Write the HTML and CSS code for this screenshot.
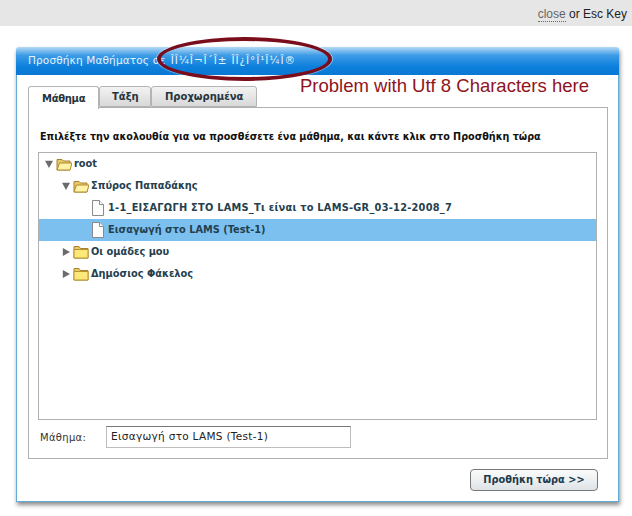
FILE: index.html
```html
<!DOCTYPE html>
<html lang="el">
<head>
<meta charset="utf-8">
<title>Προσθήκη Μαθήματος</title>
<link rel="stylesheet" href="styles.css">
</head>
<body>
<div class="topbar"><a class="close">close</a> or Esc Key</div>
<div class="dialog">
  <div class="dialog-head">Προσθήκη Μαθήματος σε <span class="garbled">ÎÎ¼Î¬Î´Î± ÎÎ¿Î°Î¹Î¼Î®</span></div>
  <div class="dialog-body">
    <div class="tabs">
      <div class="tab active">Μάθημα</div>
      <div class="tab">Τάξη</div>
      <div class="tab">Προχωρημένα</div>
    </div>
    <div class="panel">
      <p class="hint">Επιλέξτε την ακολουθία για να προσθέσετε ένα μάθημα, και κάντε κλικ στο Προσθήκη τώρα</p>
      <div class="tree">
        <div class="row lvl0"><svg class="arrow" viewBox="0 0 10 10"><path d="M0 1h10L5 10z"/></svg><svg class="ico" viewBox="0 0 16 14"><path class="fb" d="M1 13V2.500h5l1.500 1.500H14v9z"/><path class="ff" d="M1 13l2.500-7H16l-2 7z"/></svg><span>root</span></div>
        <div class="row lvl1"><svg class="arrow" viewBox="0 0 10 10"><path d="M0 1h10L5 10z"/></svg><svg class="ico" viewBox="0 0 16 14"><path class="fb" d="M1 13V2.500h5l1.500 1.500H14v9z"/><path class="ff" d="M1 13l2.500-7H16l-2 7z"/></svg><span>Σπύρος Παπαδάκης</span></div>
        <div class="row lvl2"><svg class="doc" viewBox="0 0 12 16"><path d="M.5.500h7l4 4v11H.5z"/><path d="M7.500.500v4h4"/></svg><span class="wide">1-1_ΕΙΣΑΓΩΓΗ ΣΤΟ LAMS_Τι είναι το LAMS-GR_03-12-2008_7</span></div>
        <div class="row lvl2 selected"><svg class="doc" viewBox="0 0 12 16"><path d="M.5.500h7l4 4v11H.5z"/><path d="M7.500.500v4h4"/></svg><span>Εισαγωγή στο LAMS (Test-1)</span></div>
        <div class="row lvl1"><svg class="arrow" viewBox="0 0 10 10"><path d="M1 0l9 5-9 5z"/></svg><svg class="ico" viewBox="0 0 16 14"><path class="fb" d="M1 13V1.500h5l1.500 2H15V13z"/><path class="fc" d="M1 13V4.500h14V13z"/></svg><span>Οι ομάδες μου</span></div>
        <div class="row lvl1"><svg class="arrow" viewBox="0 0 10 10"><path d="M1 0l9 5-9 5z"/></svg><svg class="ico" viewBox="0 0 16 14"><path class="fb" d="M1 13V1.500h5l1.500 2H15V13z"/><path class="fc" d="M1 13V4.500h14V13z"/></svg><span>Δημόσιος Φάκελος</span></div>
      </div>
      <div class="field"><label class="field-label">Μάθημα:</label><div class="input">Εισαγωγή στο LAMS (Test-1)</div></div>
    </div>
    <div class="actions"><div class="btn">Προθήκη τώρα &gt;&gt;</div></div>
  </div>
</div>
<div class="oval"></div>
<div class="note">Problem with Utf 8 Characters here</div>
</body>
</html>
```
FILE: styles.css
```css
* { box-sizing: border-box; }
html, body { margin: 0; padding: 0; }
body { width: 632px; height: 516px; background: #fff; font-family: "DejaVu Sans", Verdana, sans-serif; font-size: 10px; color: #111; overflow: hidden; position: relative; }
.topbar { height: 26px; background: #e6e6e6; padding: 7px 5px 0 0; text-align: right; font-family: "Liberation Sans", Arial, sans-serif; font-size: 12px; line-height: 15px; color: #222; }
.close { color: #666; border-bottom: 1px dotted #3a8a3a; }
.dialog { width: 603px; height: 455px; margin: 21px 0 0 16px; border-radius: 3px 3px 0 0; box-shadow: 1px 3px 4px rgba(60,60,60,.6); display: flex; flex-direction: column; }
.dialog-head { height: 28px; flex: none; background: linear-gradient(#b4daf4 0, #3d9be6 30%, #0c7fdc 70%, #0a78d4 100%); border-radius: 3px 3px 0 0; color: #e4f2fc; font-size: 10.500px; line-height: 15px; padding: 6px 0 0 12px; letter-spacing: .15px; white-space: nowrap; }
.garbled { color: #e4f2fc; margin-left: 2px; letter-spacing: .9px; }
.dialog-body { flex: 1; background: #fff; border: 1px solid #62abd9; border-top: 0; padding: 11px 10px 0 11px; }
.tabs { display: flex; height: 22px; position: relative; z-index: 1; }
.tab { height: 21px; padding: 0 13px; font-weight: bold; font-size: 10px; line-height: 19px; color: #26343c; background: linear-gradient(#f3f3f3, #d8d8d8); border: 1px solid #b4b4b4; border-radius: 3px 3px 0 0; }
.tab.active { height: 23px; width: 71px; padding-top: 2px; letter-spacing: -.3px; background: #fff; border-bottom: 0; }
.tab:nth-child(2) { width: 52px; padding-left: 12px; }
.tab:nth-child(3) { width: 106px; }
.panel { height: 352px; margin-top: -1px; border: 1px solid #b0b0b0; padding: 0 10px 0 9px; }
.hint { margin: 22px 0 9px 2px; font-weight: bold; font-size: 9.650px; line-height: 13px; color: #111; white-space: nowrap; }
.tree { height: 268px; border: 1px solid #b0b0b0; }
.row { height: 22px; display: flex; align-items: center; font-weight: bold; font-size: 9.800px; color: #24404e; white-space: nowrap; }
.row span { margin: 0 0 2px 2px; }
.row .wide { letter-spacing: .26px; }
.lvl0 { padding-left: 6px; }
.lvl1 { padding-left: 23px; }
.lvl2 { padding-left: 53px; }
.row.selected { background: #7cc0f0; }
.arrow { width: 8px; height: 8px; margin-right: 3px; fill: #6b6b6b; flex: none; }
.ico { width: 16px; height: 14px; flex: none; }
.fb { fill: #e8c96a; stroke: #a8822c; stroke-width: 1; }
.ff { fill: #fff3a8; stroke: #b08a30; stroke-width: 1; }
.fc { fill: #ffe87a; stroke: #b8922f; stroke-width: 1; }
.doc { width: 12px; height: 16px; margin-right: 2px; flex: none; fill: #fdfdfd; stroke: #8a8a8a; stroke-width: 1; }
.field { display: flex; align-items: center; height: 22px; margin-top: 6px; padding-left: 2px; }
.field-label { width: 66px; font-size: 10px; color: #333; letter-spacing: .3px; }
.input { width: 245px; height: 22px; border: 1px solid #bdbdbd; border-top-color: #777; padding-left: 4px; font-size: 10.500px; line-height: 19px; color: #222; letter-spacing: .3px; }
.actions { display: flex; justify-content: flex-end; padding: 10px 10px 0 0; }
.btn { width: 128px; height: 22px; border: 1px solid #777; border-radius: 4px; background: linear-gradient(#fbfbfb, #dfe3e6); font-weight: bold; font-size: 9.800px; line-height: 20px; text-align: center; color: #1d3a4c; }
.oval { position: absolute; left: 157px; top: 37px; width: 175px; height: 44px; border: 4px solid #7a0d1c; border-radius: 50%; box-shadow: 0 0 1px 1px rgba(255,255,255,.5); }
.note { position: absolute; left: 300px; top: 76px; font-family: "Liberation Sans", Arial, sans-serif; font-size: 18.500px; line-height: 20px; color: #8f1420; white-space: nowrap; }
```
